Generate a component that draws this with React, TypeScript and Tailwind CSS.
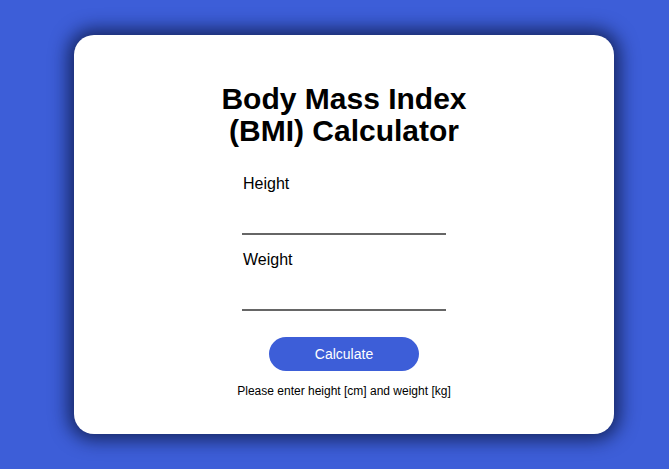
import React, { useState } from 'react';

export default function App() {
    const [height, setHeight] = useState('');
    const [weight, setWeight] = useState('');
    const [message, setMessage] = useState('Please enter height [cm] and weight [kg]');

    const calculate = () => {
        const h = parseFloat(height) / 100;
        const w = parseFloat(weight);
        if (!h || !w) {
            setMessage('Please enter height [cm] and weight [kg]');
            return;
        }
        setMessage(`Your BMI is ${(w / (h * h)).toFixed(1)}`);
    };

    return (
        <div className="min-h-[469px] w-full bg-[#3d5ed8] pl-[74px] pt-[35px] font-['Liberation_Sans',Arial,sans-serif]">
            <div className="flex h-[399px] w-[540px] flex-col items-center rounded-[20px] bg-white pt-[48px] shadow-[0_0_18px_6px_rgba(10,20,60,0.75)]">
                <h1 className="text-center text-[30px] font-bold leading-[32px] text-black">
                    Body Mass Index
                    <br />
                    (BMI) Calculator
                </h1>

                <div className="mt-[25px] flex w-[204px] flex-col">
                    <label className="pl-px text-[16px] leading-[24px] text-black">Height</label>
                    <input
                        value={height}
                        onChange={(e) => setHeight(e.target.value)}
                        className="h-[39px] border-b-2 border-[#666] bg-transparent text-[16px] outline-none"
                    />
                    <label className="mt-[13px] pl-px text-[16px] leading-[24px] text-black">Weight</label>
                    <input
                        value={weight}
                        onChange={(e) => setWeight(e.target.value)}
                        className="h-[39px] border-b-2 border-[#666] bg-transparent text-[16px] outline-none"
                    />
                </div>

                <button
                    onClick={calculate}
                    className="mt-[26px] h-[34px] w-[150px] rounded-full bg-[#3d5ed8] text-[14px] text-white"
                >
                    Calculate
                </button>

                <p className="mt-[12px] text-[12px] leading-[16px] text-black">{message}</p>
            </div>
        </div>
    );
}
